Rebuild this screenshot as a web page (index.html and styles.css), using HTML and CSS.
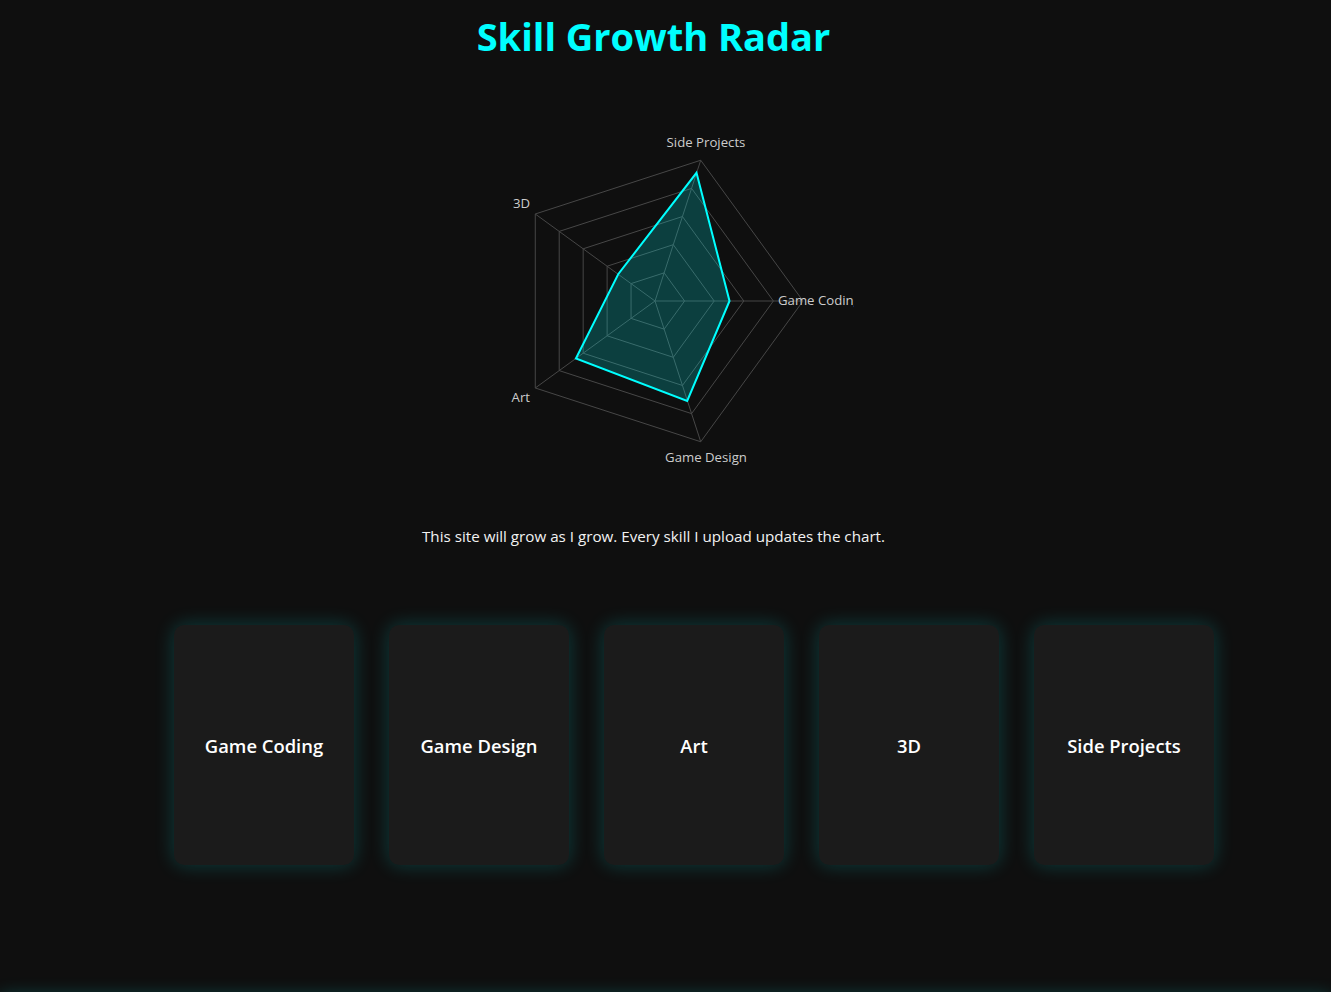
FILE: index.html
```html
<!DOCTYPE html>
<html lang="en">
<head>
<meta charset="utf-8">
<title>Skill Growth Radar</title>
<link rel="stylesheet" href="styles.css">
</head>
<body>
<main class="page">
  <h1 class="title">Skill Growth Radar</h1>
  <div class="chart-wrap">
    <svg class="radar" width="400" height="400" viewBox="0 0 400 400">
      <g class="grid">
        <polygon points="230.6,201 210.15,229.15 177.05,218.40 177.05,183.60 210.15,172.85"/>
        <polygon points="260.2,201 219.29,257.30 153.11,235.80 153.11,166.20 219.29,144.70"/>
        <polygon points="289.8,201 228.44,285.46 129.16,253.20 129.16,148.80 228.44,116.54"/>
        <polygon points="319.4,201 237.59,313.61 105.21,270.60 105.21,131.40 237.59,88.39"/>
        <polygon points="349,201 246.73,341.76 81.27,287.99 81.27,114.01 246.73,60.24"/>
        <line x1="201" y1="201" x2="349" y2="201"/>
        <line x1="201" y1="201" x2="246.73" y2="341.76"/>
        <line x1="201" y1="201" x2="81.27" y2="287.99"/>
        <line x1="201" y1="201" x2="81.27" y2="114.01"/>
        <line x1="201" y1="201" x2="246.73" y2="60.24"/>
      </g>
      <polygon class="data" points="275.5,201 233.2,300.9 121.9,258.5 164.2,174.2 242.5,72.8"/>
      <g class="labels">
        <text x="252" y="47" text-anchor="middle">Side Projects</text>
        <text x="324" y="205" text-anchor="start">Game Coding</text>
        <text x="252" y="362" text-anchor="middle">Game Design</text>
        <text x="76" y="302" text-anchor="end">Art</text>
        <text x="76" y="108" text-anchor="end">3D</text>
      </g>
    </svg>
  </div>
  <p class="intro">This site will grow as I grow. Every skill I upload updates the chart.</p>
  <section class="cards">
    <div class="card">Game Coding</div>
    <div class="card">Game Design</div>
    <div class="card">Art</div>
    <div class="card">3D</div>
    <div class="card">Side Projects</div>
  </section>
</main>
<footer class="footer"></footer>
</body>
</html>
```

FILE: styles.css
```css
html, body {
  margin: 0;
  padding: 0;
  background: #0f0f0f;
}

body {
  color: #f0f0f0;
  font-family: "Open Sans", "Noto Sans", sans-serif;
}

.page {
  padding-right: 24px;
  text-align: center;
}

.title {
  margin: 11px 0 0;
  font-size: 38px;
  line-height: 50px;
  font-weight: 700;
  color: #00ffff;
}

.chart-wrap {
  margin-top: 39px;
  display: flex;
  justify-content: center;
}

.radar {
  display: block;
  overflow: hidden;
}

.grid polygon,
.grid line {
  fill: none;
  stroke: #474747;
  stroke-width: 1;
}

.data {
  fill: rgba(0, 255, 255, 0.2);
  stroke: #00ffff;
  stroke-width: 2;
  stroke-linejoin: miter;
}

.labels text {
  fill: #cccccc;
  font-family: "Open Sans", "Noto Sans", sans-serif;
  font-size: 13.2px;
}

.intro {
  margin: 24px 0 0;
  font-size: 15.2px;
  line-height: 24px;
  color: #f2f2f2;
}

.cards {
  margin-top: 77px;
  display: flex;
  justify-content: center;
  gap: 35px;
  padding-left: 81px;
}

.card {
  width: 180px;
  height: 240px;
  border-radius: 10px;
  background: #1b1b1b;
  box-shadow: 0 0 20px rgba(0, 255, 255, 0.2);
  display: flex;
  align-items: center;
  justify-content: center;
  font-size: 18.4px;
  font-weight: 600;
  color: #ffffff;
}

.footer {
  margin-top: 130px;
  height: 40px;
  box-shadow: 0 0 18px rgba(0, 255, 255, 0.22);
}
```
